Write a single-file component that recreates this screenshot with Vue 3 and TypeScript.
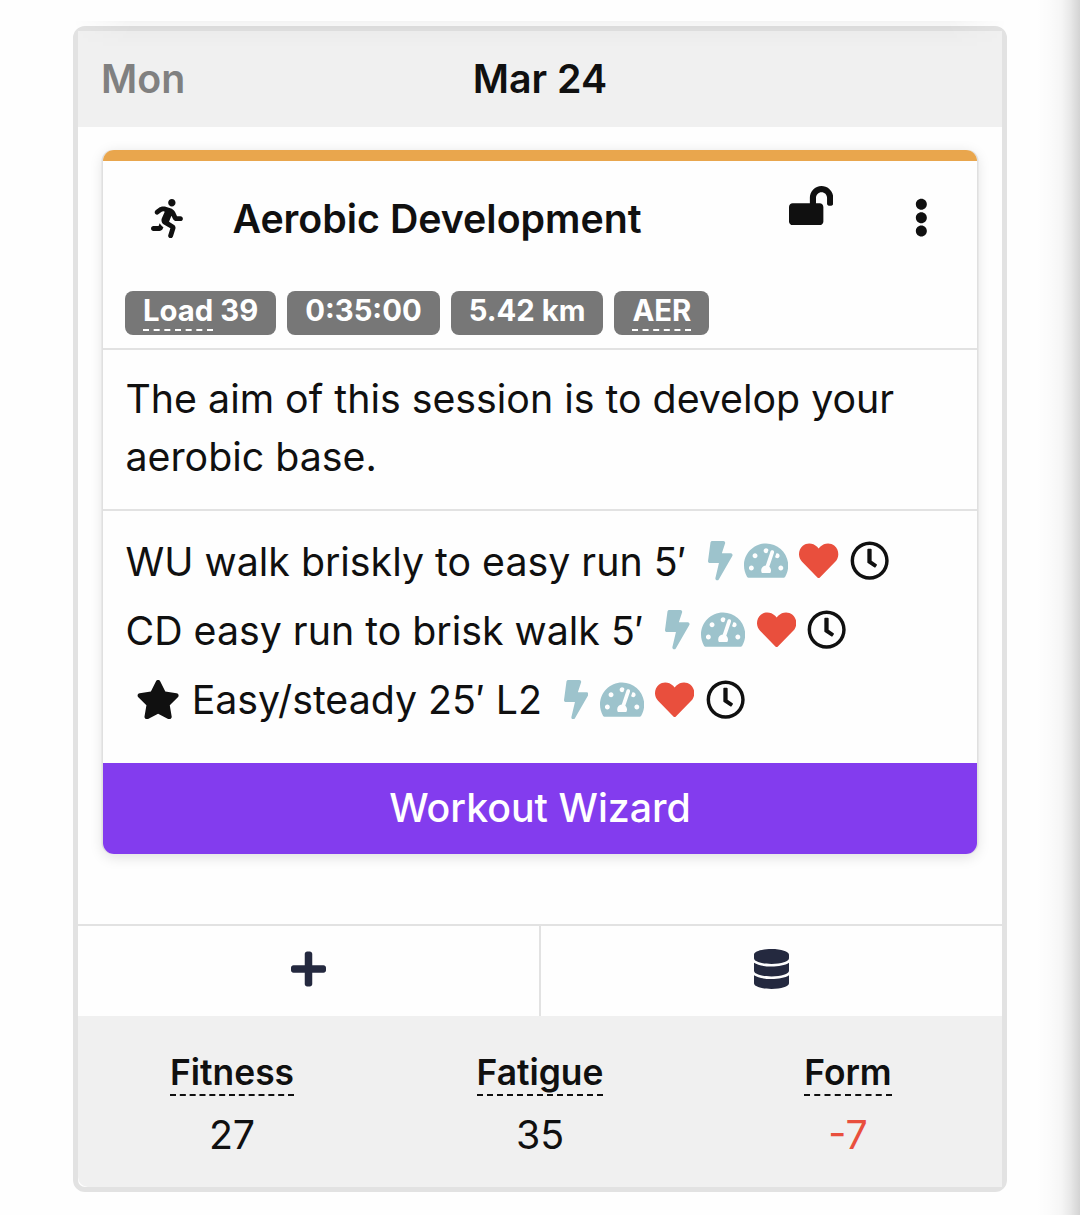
<script setup lang="ts">
interface Icon { w: number; d: string; color?: string }
interface Step { text: string; starred?: boolean }

const icons: Record<string, Icon> = {
  run: { w: 416, d: 'M272 96c26.51 0 48-21.49 48-48S298.51 0 272 0s-48 21.49-48 48 21.49 48 48 48zM113.69 317.47l-14.8 34.52H32c-17.67 0-32 14.33-32 32s14.33 32 32 32h77.45c19.25 0 36.58-11.44 44.11-29.09l8.79-20.52-10.67-6.3c-17.32-10.23-30.06-25.37-37.99-42.61zM384 223.99h-44.03l-26.06-53.25c-12.5-25.55-35.45-44.23-61.78-50.94l-71.08-21.14c-28.3-6.8-57.77-.55-80.84 17.14l-39.67 30.41c-14.03 10.75-16.69 30.83-5.94 44.86s30.84 16.66 44.86 5.91l39.69-30.41c7.67-5.89 17.44-8 25.27-6.14l14.7 4.37-37.46 87.39c-12.62 29.48-1.31 64.01 26.3 80.31l84.98 50.17-27.47 87.73c-5.28 16.86 4.11 34.81 20.97 40.09 3.19 1 6.41 1.48 9.58 1.48 13.61 0 26.23-8.77 30.52-22.45l31.64-101.06c5.91-20.77-2.89-43.08-21.64-54.39l-61.24-36.14 31.31-78.28 20.27 41.43c8 16.34 24.92 26.89 43.11 26.89H384c17.67 0 32-14.33 32-32s-14.33-31.99-32-31.99z' },
  unlock: { w: 576, d: 'M423.5 0C339.5.3 272 69.5 272 153.5V224H48c-26.5 0-48 21.5-48 48v192c0 26.5 21.5 48 48 48h352c26.5 0 48-21.5 48-48V272c0-26.5-21.5-48-48-48h-48v-71.1c0-39.6 31.7-72.5 71.3-72.9 40-.4 72.7 32.1 72.7 72v80c0 13.3 10.7 24 24 24h32c13.3 0 24-10.7 24-24v-80C576 68 507.5-.3 423.5 0z' },
  more: { w: 192, d: 'M96 184c39.8 0 72 32.2 72 72s-32.2 72-72 72-72-32.2-72-72 32.2-72 72-72zM24 80c0 39.8 32.2 72 72 72s72-32.2 72-72S135.8 8 96 8 24 40.2 24 80zm0 352c0 39.8 32.2 72 72 72s72-32.2 72-72-32.2-72-72-72-72 32.2-72 72z' },
  star: { w: 576, d: 'M259.3 17.8L194 150.2 47.9 171.5c-26.2 3.8-36.7 36.1-17.7 54.6l105.7 103-25 145.5c-4.5 26.3 23.2 46 46.4 33.7L288 439.6l130.7 68.7c23.2 12.2 50.9-7.4 46.4-33.7l-25-145.5 105.7-103c19-18.5 8.5-50.8-17.7-54.6L382 150.2 316.7 17.8c-11.7-23.6-45.6-23.9-57.4 0z' },
  plus: { w: 448, d: 'M416 208H272V64c0-17.67-14.33-32-32-32h-32c-17.67 0-32 14.33-32 32v144H32c-17.67 0-32 14.33-32 32v32c0 17.67 14.33 32 32 32h144v144c0 17.67 14.33 32 32 32h32c17.67 0 32-14.33 32-32V304h144c17.67 0 32-14.33 32-32v-32c0-17.67-14.33-32-32-32z' },
  database: { w: 448, d: 'M448 73.143v45.714C448 159.143 347.667 192 224 192S0 159.143 0 118.857V73.143C0 32.857 100.333 0 224 0s224 32.857 224 73.143zM448 176v102.857C448 319.143 347.667 352 224 352S0 319.143 0 278.857V176c48.125 33.143 136.208 48.572 224 48.572S399.874 209.143 448 176zm0 160v102.857C448 479.143 347.667 512 224 512S0 479.143 0 438.857V336c48.125 33.143 136.208 48.572 224 48.572S399.874 369.143 448 336z' },
}

const targets: Icon[] = [
  { w: 320, color: '#9dc3cc', d: 'M296 160H180.6l42.6-129.8C227.2 15 215.7 0 200 0H56C44 0 33.8 8.9 32.2 20.8l-32 240C-1.7 275.2 9.5 288 24 288h118.7L96.6 482.5c-3.6 15.2 8 29.5 23.3 29.5 8.4 0 16.4-4.4 20.8-12l176-304c9.3-15.9-2.2-36-20.7-36z' },
  { w: 576, color: '#9dc3cc', d: 'M288 32C128.94 32 0 160.94 0 320c0 52.8 14.25 102.26 39.06 144.8 5.61 9.62 16.3 15.2 27.44 15.2h443c11.14 0 21.83-5.58 27.44-15.2C561.75 422.26 576 372.8 576 320c0-159.06-128.94-288-288-288zm0 64c14.71 0 26.58 10.13 30.32 23.65-1.11 2.26-2.64 4.23-3.45 6.67l-9.22 27.67c-5.13 3.49-10.97 6.01-17.64 6.01-17.67 0-32-14.33-32-32S270.33 96 288 96zM96 384c-17.67 0-32-14.33-32-32s14.33-32 32-32 32 14.33 32 32-14.33 32-32 32zm48-160c-17.67 0-32-14.33-32-32s14.33-32 32-32 32 14.33 32 32-14.33 32-32 32zm246.77-72.41l-61.33 184C343.13 347.33 352 364.54 352 384c0 11.72-3.38 22.55-8.88 32H232.88c-5.5-9.45-8.88-20.28-8.88-32 0-33.94 26.5-61.43 59.9-63.59l61.34-184.01c4.17-12.56 17.73-19.45 30.36-15.17 12.57 4.19 19.35 17.79 15.17 30.36zm14.66 57.2l15.52-46.55c3.47-1.29 7.13-2.23 11.05-2.23 17.67 0 32 14.33 32 32s-14.33 32-32 32c-11.38-.01-20.89-6.28-26.57-15.22zM480 384c-17.67 0-32-14.33-32-32s14.33-32 32-32 32 14.33 32 32-14.33 32-32 32z' },
  { w: 512, color: '#e94f3d', d: 'M462.3 62.6C407.5 15.9 326 24.3 275.7 76.2L256 96.5l-19.7-20.3C186.1 24.3 104.5 15.9 49.7 62.6c-62.8 53.6-66.1 149.8-9.9 207.9l200 204c9 9 23.4 9 32.4 0l200-204c56.3-58.1 53-154.3-9.9-207.9z' },
  { w: 512, color: '#101010', d: 'M256 8C119 8 8 119 8 256s111 248 248 248 248-111 248-248S393 8 256 8zm0 451c-112 0-203-91-203-203S144 53 256 53s203 91 203 203-91 203-203 203zM238 100h32q12 0 12 12v146l65 44q8 6 3 14l-17 25q-6 8-14 3l-88-58q-5-4-5-10V112q0-12 12-12z' },
]

const steps: Step[] = [
  { text: 'WU walk briskly to easy run 5′' },
  { text: 'CD easy run to brisk walk 5′' },
  { text: 'Easy/steady 25′ L2', starred: true },
]

const stats = [
  { label: 'Fitness', value: '27' },
  { label: 'Fatigue', value: '35' },
  { label: 'Form', value: '-7', negative: true },
]
</script>

<template>
  <main class="page">
    <section class="day">
      <header class="day-head">
        <span class="weekday">Mon</span>
        <span class="date">Mar 24</span>
        <span></span>
      </header>

      <div class="day-body">
        <article class="workout">
          <div class="stripe"></div>
          <div class="title-row">
            <svg class="icon run" :viewBox="`0 0 ${icons.run.w} 512`"><path :d="icons.run.d" /></svg>
            <h2>Aerobic Development</h2>
            <svg class="icon unlock" :viewBox="`0 0 ${icons.unlock.w} 512`"><path :d="icons.unlock.d" /></svg>
            <svg class="icon more" :viewBox="`0 0 ${icons.more.w} 512`"><path :d="icons.more.d" /></svg>
          </div>
          <div class="badges">
            <span class="badge"><span class="hint">Load</span>&nbsp;39</span>
            <span class="badge">0:35:00</span>
            <span class="badge">5.42 km</span>
            <span class="badge"><span class="hint">AER</span></span>
          </div>
          <p class="aim">The aim of this session is to develop your aerobic base.</p>
          <ul class="steps">
            <li v-for="s in steps" :key="s.text">
              <svg v-if="s.starred" class="icon star" :viewBox="`0 0 ${icons.star.w} 512`"><path :d="icons.star.d" /></svg>
              <span class="step-text">{{ s.text }}</span>
              <span class="targets">
                <svg v-for="(t, i) in targets" :key="i" class="icon" :viewBox="`0 0 ${t.w} 512`" :style="{ width: (t.w * 39.3) / 512 + 'px', fill: t.color }"><path :d="t.d" /></svg>
              </span>
            </li>
          </ul>
          <button class="wizard">Workout Wizard</button>
        </article>
      </div>

      <div class="actions">
        <div class="action"><svg class="icon act" :viewBox="`0 0 ${icons.plus.w} 512`"><path :d="icons.plus.d" /></svg></div>
        <div class="action"><svg class="icon act" :viewBox="`0 0 ${icons.database.w} 512`"><path :d="icons.database.d" /></svg></div>
      </div>

      <footer class="stats">
        <div v-for="s in stats" :key="s.label" class="stat">
          <span class="stat-label">{{ s.label }}</span>
          <span class="stat-value" :class="{ negative: s.negative }">{{ s.value }}</span>
        </div>
      </footer>
    </section>
    <div class="top-shade"></div>
    <div class="edge-shade"></div>
  </main>
</template>

<style>
body { background: #fefefe; overflow: hidden; }
</style>

<style scoped>
* { box-sizing: border-box; }
.page {
  position: relative;
  width: 1080px;
  height: 1215px;
  padding: 26px 73px 0;
  overflow: hidden;
  background: #fefefe;
  color: #101010;
  font-family: Inter, "Liberation Sans", sans-serif;
  font-size: 39.3px;
}
.day {
  height: 1166px;
  border: 5px solid #e2e2e2;
  border-radius: 12px;
  background: #fefefe;
  display: flex;
  flex-direction: column;
}
.day-head {
  height: 96px;
  flex: none;
  padding: 0 23px;
  background: #f0f0f0;
  display: grid;
  grid-template-columns: 1fr auto 1fr;
  align-items: center;
  font-weight: 600;
  line-height: 58px;
}
.weekday { color: #808080; }
.day-body { height: 797px; flex: none; padding: 23px 25px 0; }
.workout {
  height: 704px;
  border-radius: 11px;
  overflow: hidden;
  display: flex;
  flex-direction: column;
  background: #fefefe;
  box-shadow: -1.5px 0 0 #e0e0e0, 1.5px 0 0 #e0e0e0, 0 3px 14px rgba(0, 0, 0, 0.13);
}
.stripe { height: 11px; flex: none; background: #e9a64d; }
.icon { height: 39.3px; display: block; flex: none; fill: #101010; }
.title-row {
  height: 130px;
  padding: 0 48px;
  display: flex;
  align-items: flex-start;
  flex: none;
}
.run { width: 31.9px; margin-top: 37.5px; }
h2 { margin: 29px 0 0 49.5px; flex: 1; font-size: 39.3px; font-weight: 600; line-height: 58px; white-space: nowrap; }
.unlock { width: 44.2px; margin: 24.5px 81px 0 0; }
.more { width: 14.7px; margin-top: 37.3px; }
.badges {
  display: flex;
  gap: 11px;
  height: 59px;
  flex: none;
  padding: 0 22px;
  border-bottom: 2px solid #e2e2e2;
}
.badge {
  height: 44px;
  padding: 0 18px;
  border-radius: 8px;
  background: #777;
  color: #fff;
  font-size: 29.3px;
  font-weight: 700;
  line-height: 40px;
  white-space: nowrap;
}
.hint {
  display: inline-block;
  height: 40px;
  border-bottom: 2px dashed #fff;
}
.aim {
  height: 161px;
  flex: none;
  margin: 0;
  padding: 20px 22.5px;
  border-bottom: 2px solid #e2e2e2;
  line-height: 58px;
}
.steps { flex: 1; list-style: none; margin: 0; padding: 15.5px 22.5px 0; }
.steps li { height: 69.1px; display: flex; align-items: center; white-space: nowrap; }
.star { width: 44.2px; margin: 0 12px 0 10px; }
.targets { display: flex; gap: 11.3px; margin-left: 21.7px; }
.wizard {
  height: 91px;
  flex: none;
  border: 0;
  padding: 0 0 2px;
  background: #833cee;
  color: #fff;
  font: 500 39.3px Inter, "Liberation Sans", sans-serif;
}
.actions { height: 92px; flex: none; border-top: 2px solid #e2e2e2; display: flex; }
.action { flex: 1; display: flex; justify-content: center; padding-top: 23px; }
.action + .action { border-left: 2px solid #e2e2e2; }
.act { width: 35px; height: 40px; fill: #24293f; }
.stats { flex: 1; display: flex; padding-top: 31px; background: #f0f0f0; border-bottom-left-radius: 10px; }
.stat { flex: 1; display: flex; flex-direction: column; align-items: center; }
.stat-label {
  height: 49px;
  font-size: 35.4px;
  font-weight: 600;
  line-height: 51px;
  border-bottom: 2px dashed #101010;
}
.stat-value { margin-top: 10px; line-height: 58px; }
.negative { color: #e94f3d; }
.top-shade {
  position: absolute;
  left: 73px;
  top: 21px;
  width: 934px;
  height: 27px;
  background: linear-gradient(rgba(0, 0, 0, 0.045), rgba(0, 0, 0, 0.015) 40%, transparent);
  mask-image: linear-gradient(90deg, transparent, #000 60px, #000 874px, transparent);
}
.edge-shade {
  position: absolute;
  right: 0;
  top: 0;
  width: 44px;
  height: 1215px;
  background: linear-gradient(90deg, transparent, rgba(0, 0, 0, 0.01) 30%, rgba(0, 0, 0, 0.035) 58%, rgba(0, 0, 0, 0.085) 78%, rgba(0, 0, 0, 0.17));
}
</style>
